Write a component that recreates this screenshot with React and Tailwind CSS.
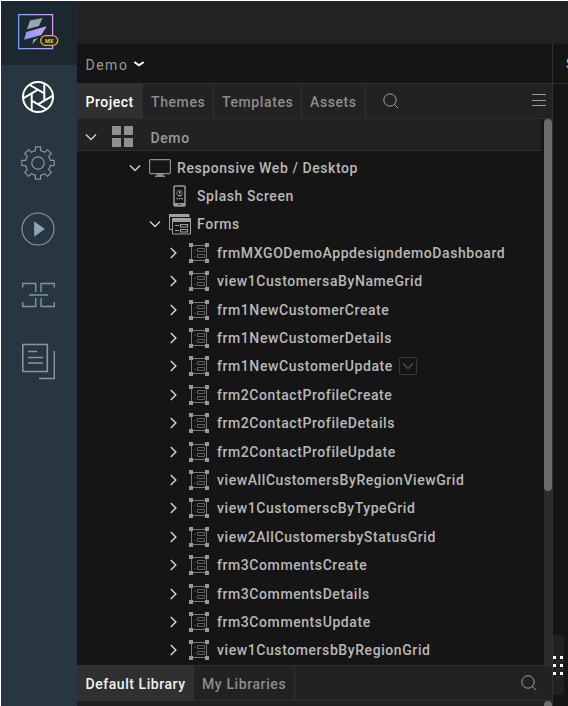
import React from "react";

const forms = [
  "frmMXGODemoAppdesigndemoDashboard",
  "view1CustomersaByNameGrid",
  "frm1NewCustomerCreate",
  "frm1NewCustomerDetails",
  "frm1NewCustomerUpdate",
  "frm2ContactProfileCreate",
  "frm2ContactProfileDetails",
  "frm2ContactProfileUpdate",
  "viewAllCustomersByRegionViewGrid",
  "view1CustomerscByTypeGrid",
  "view2AllCustomersbyStatusGrid",
  "frm3CommentsCreate",
  "frm3CommentsDetails",
  "frm3CommentsUpdate",
  "view1CustomersbByRegionGrid",
];

function Chevron({ right, className = "" }) {
  return (
    <svg className={`shrink-0 ${className}`} width="12" height="12" viewBox="0 0 12 12" fill="none" stroke="currentColor" strokeWidth="1.5">
      <path d={right ? "M3.8 1 L8.8 6 L3.8 11" : "M1 3.5 L6 8.5 L11 3.5"} />
    </svg>
  );
}

function SearchIcon() {
  return (
    <svg className="shrink-0" width="16" height="16" viewBox="0 0 16 16" fill="none" stroke="#a0a0a0" strokeWidth="1">
      <circle cx="7" cy="7" r="6.2" />
      <path d="M11.3 11.3 L15.3 15.3" />
    </svg>
  );
}

function FormIcon() {
  return (
    <svg className="shrink-0" width="20" height="20" viewBox="0 0 20 20" fill="none">
      <path d="M2 2.5H18M2 17.5H18M2.5 2V18M17.5 2V18" stroke="#777" />
      <path d="M8.5 5.5h7v3h-7zM8.5 11.5h7v3h-7z" stroke="#606060" />
      <path d="M5 7.5h2M5 13.5h2" stroke="#3a3a3a" />
      <path d="M0 0h4v4H0zM16 0h4v4h-4zM0 16h4v4H0zM16 16h4v4h-4z" fill="#999" />
    </svg>
  );
}

function FormsIcon() {
  return (
    <svg className="shrink-0" width="22" height="21" viewBox="0 0 22 21" fill="none">
      <path d="M.5 16V.5H20V3M.5 15.5H3" stroke="#a0a0a0" />
      <path d="M0 0h20v3H0z" fill="#a0a0a0" />
      <path d="M3.5 4.5h18v15.5h-18z" fill="#151515" stroke="#a0a0a0" />
      <path d="M3 4h19v4H3z" fill="#a0a0a0" />
      <path d="M11.5 10.5h7v2.5h-7zM11.5 15.5h7v2.5h-7zM6 11.5h4M6 16.5h4" stroke="#a0a0a0" strokeWidth="1.2" />
    </svg>
  );
}

function MonitorIcon() {
  return (
    <svg className="shrink-0" width="22" height="18" viewBox="0 0 22 18" fill="none">
      <rect x=".6" y=".6" width="20.8" height="14" rx="1" stroke="#909090" strokeWidth="1.2" />
      <path d="M8 15h6v1.5h2V18H6v-1.5h2z" fill="#8c8c8c" />
    </svg>
  );
}

function PhoneIcon() {
  return (
    <svg className="shrink-0" width="13" height="22" viewBox="0 0 13 22" fill="none">
      <rect x="1" y="1" width="11" height="20" rx="1" stroke="#999" strokeWidth="1.5" />
      <path d="M1 18h11v3H1z" fill="#999" />
      <circle cx="6.5" cy="8" r="2.8" stroke="#777" strokeWidth=".9" />
      <path d="M6 6h1.4v3H6zM3.5 13h1.5v1.2H3.5zM6 13h1.5v1.2H6zM8.4 13H10v1.2H8.4zM5 10h3.5v1.2H5z" fill="#a0a0a0" />
      <path d="M5.5 19h2v1h-2z" fill="#222" />
    </svg>
  );
}

function Logo() {
  return (
    <svg className="ml-[17px] mt-3 shrink-0" width="42" height="38" viewBox="0 0 42 38" fill="none">
      <defs>
        <linearGradient id="edge" x1="0" y1="0" x2="36" y2="0" gradientUnits="userSpaceOnUse">
          <stop stopColor="#7aa2f7" />
          <stop offset="1" stopColor="#d79af5" />
        </linearGradient>
        <linearGradient id="blade" x1="6" y1="24" x2="28" y2="16" gradientUnits="userSpaceOnUse">
          <stop stopColor="#7c9cf8" />
          <stop offset="1" stopColor="#d59af5" />
        </linearGradient>
      </defs>
      <rect x=".6" y="1.6" width="34" height="34" stroke="url(#edge)" strokeWidth="1.3" />
      <path d="M12 7.5 L24.5 5 L21 13 L9 16.3Z" fill="#96a5ae" />
      <path d="M8.3 18.9 L28.7 13.3 L23.3 22 L6 26.7Z" fill="url(#blade)" />
      <path d="M15.3 26.5 L20 24.8 L14.3 31.2Z" fill="#96a5ae" />
      <rect x="22.7" y="22.7" width="17" height="9.6" rx="4.8" fill="#1d272f" stroke="#e5b51c" strokeWidth="1.3" />
      <text x="31.2" y="29.5" textAnchor="middle" fill="#e5b51c" fontFamily="Roboto, sans-serif" fontWeight="900" fontSize="5.6">MX</text>
    </svg>
  );
}

function ApertureIcon() {
  return (
    <svg width="34" height="34" viewBox="0 0 34 34" fill="none" stroke="white" strokeWidth="2">
      <circle cx="17" cy="17" r="15" />
      <path d="M10.7 13.35V30.6M17 9.7L2.1 18.35M23.3 13.35L8.4 4.75M23.3 20.65V3.4M17 24.3L31.9 15.65M10.7 20.65L25.6 29.25" />
    </svg>
  );
}

function GearIcon() {
  return (
    <svg width="34" height="34" viewBox="0 0 34 34" fill="none" stroke="#8596aa" strokeWidth="1.2" strokeLinejoin="round">
      <circle cx="17" cy="17" r="6.2" />
      <path d="M14.4 .8h5.2v3.8l4.1 1.7 2.7-2.7 4 4-2.7 2.7 1.7 4.1h3.8v5.2h-3.8l-1.7 4.1 2.7 2.7-4 4-2.7-2.7-4.1 1.7v3.8h-5.2v-3.8l-4.1-1.7-2.7 2.7-4-4 2.7-2.7-1.7-4.1H.8v-5.2h3.8l1.7-4.1-2.7-2.7 4-4 2.7 2.7 4.1-1.7z" />
    </svg>
  );
}

function PlayIcon() {
  return (
    <svg width="34" height="34" viewBox="0 0 34 34" fill="none">
      <circle cx="17" cy="17" r="16" stroke="#8596aa" strokeWidth="1.2" />
      <path d="M13.2 9.3v15.4L23.8 17z" fill="#91a2b9" />
    </svg>
  );
}

function FlowIcon() {
  return (
    <svg width="34" height="26" viewBox="0 0 34 26" fill="none" stroke="#8094a3" strokeWidth="1.4">
      <path d="M1.7 5.5V1.5h13v8.5M33.3 5.5V1.5H20v8.5M1.7 20v4.5h13V16M33.3 20v4.5H20V16M8 13h19" />
    </svg>
  );
}

function DocsIcon() {
  return (
    <svg width="34" height="37" viewBox="0 0 34 37" fill="none" stroke="#8497a8">
      <path d="M1.8 1.5h24.5v27H1.8z" strokeWidth="1.6" />
      <path d="M7 8.5h9M7 14.5h15M7 20h15" strokeWidth="1.6" />
      <path d="M33.3 8v27.5H18" strokeWidth="1.4" />
    </svg>
  );
}

export default function App() {
  return (
    <div className="flex h-[706px] w-[568px] overflow-hidden border-l border-t border-white bg-[#151515] font-['Roboto',sans-serif] text-[14px] font-medium leading-none text-[#b8b8b8]">
      <aside className="flex w-[76px] shrink-0 flex-col bg-[#283640]">
        <div className="flex h-16 bg-[#1d272f]"><Logo /></div>
        <nav className="flex flex-col items-start pl-5">
          <div className="mt-[15px]"><ApertureIcon /></div>
          <div className="mt-8"><GearIcon /></div>
          <div className="mt-8"><PlayIcon /></div>
          <div className="mt-[36px]"><FlowIcon /></div>
          <div className="mt-[35px]"><DocsIcon /></div>
        </nav>
      </aside>

      <div className="flex min-w-0 flex-1 flex-col">
        <div className="h-[43px] shrink-0 border-b border-[#1d1d1d] bg-[#232323]" />
        <div className="flex min-h-0 flex-1">
          <section className="flex w-[476px] shrink-0 flex-col border-r border-[#303030]">
            <header className="flex h-10 shrink-0 items-center border-b border-[#303030] pl-[8.5px] pt-[3px] text-[#999]">
              <span className="font-normal tracking-[1.5px]">Demo</span>
              <svg className="mb-[2px] ml-[5px]" width="12" height="8" viewBox="0 0 12 8" fill="none" stroke="white" strokeWidth="2.1" strokeLinecap="round"><path d="M2 2.5 L6 5.3 L10 2.5" /></svg>
            </header>

            <div className="flex h-[35px] shrink-0 border-b border-[#2e2e2e] bg-[#222] tracking-[0.6px] text-[#8c8c8c]">
              <div className="flex w-[66px] items-center bg-[#303030] pl-[8.5px] pt-px tracking-[0.5px] text-white">Project</div>
              <div className="flex w-[71px] items-center border-r border-[#333] pl-2 pt-px">Themes</div>
              <div className="flex w-[88px] items-center border-r border-[#333] pl-2 pt-px">Templates</div>
              <div className="flex w-[64px] items-center border-r border-[#333] pl-2 pt-px">Assets</div>
              <div className="flex flex-1 items-center justify-between pl-[17px] pr-[6px]">
                <SearchIcon />
                <svg className="mb-[2px]" width="14" height="14" viewBox="0 0 14 14" stroke="#9a9a9a" strokeWidth="1"><path d="M0 1.5h14M0 7.5h14M0 12.5h14" /></svg>
              </div>
            </div>

            <div className="flex h-[546px] shrink-0">
              <div className="min-w-0 flex-1">
                <div className="mr-[3px] flex h-8 items-center border-b border-[#303030] bg-[#222] pl-2 pt-[4px] text-[#999]">
                  <Chevron className="text-[#ccc]" />
                  <div className="ml-[15px] grid grid-cols-2 gap-[3px]">
                    <i className="h-[9px] w-[9px] bg-[#909090]" /><i className="h-[9px] w-[9px] bg-[#909090]" />
                    <i className="h-[9px] w-[9px] bg-[#909090]" /><i className="h-[9px] w-[9px] bg-[#909090]" />
                  </div>
                  <span className="ml-[17.5px] mt-[2px] tracking-[0.6px]">Demo</span>
                </div>
                <div className="pt-[2.5px] tracking-[0.58px]">
                  <div className="flex h-[28.4px] items-center pl-[52px]">
                    <Chevron className="text-[#ccc]" />
                    <span className="ml-2"><MonitorIcon /></span>
                    <span className="ml-[6px]">Responsive Web / Desktop</span>
                  </div>
                  <div className="flex h-[28.4px] items-center pl-[96px]">
                    <PhoneIcon />
                    <span className="ml-[11px]">Splash Screen</span>
                  </div>
                  <div className="flex h-[28.4px] items-center pl-[72px]">
                    <Chevron className="text-[#ccc]" />
                    <span className="ml-2"><FormsIcon /></span>
                    <span className="ml-[6px]">Forms</span>
                  </div>
                  {forms.map((name) => (
                    <div key={name} className="flex h-[28.4px] items-center whitespace-nowrap pl-[90px]">
                      <Chevron right className="text-[#d0d0d0]" />
                      <span className="ml-[10px]"><FormIcon /></span>
                      <span className="ml-2">{name}</span>
                      {name === "frm1NewCustomerUpdate" && (
                        <span className="ml-[6px] flex h-[18px] w-[18px] items-center justify-center rounded-[2px] border border-[#383838] text-[#505050]">
                          <Chevron />
                        </span>
                      )}
                    </div>
                  ))}
                </div>
              </div>
              <div className="w-2 bg-[#2b2b2b]"><div className="h-[372px] rounded-full bg-[#6b6b6b]" /></div>
            </div>

            <div className="flex h-9 shrink-0 border-b border-t border-[#303030] bg-[#222]">
              <div className="flex w-[117px] items-center bg-[#303030] pl-[8.5px] pt-px tracking-[0.55px] text-[#f2f2f2]">Default Library</div>
              <div className="flex w-[101px] items-center border-r border-[#333] pl-2 pt-px tracking-[0.6px] text-[#8c8c8c]">My Libraries</div>
              <div className="flex flex-1 items-center justify-end pr-[15px]"><SearchIcon /></div>
            </div>
            <div className="flex flex-1 justify-end bg-[#1f1f1f]">
              <div className="w-2 rounded-t-full bg-[#6b6b6b]" />
            </div>
          </section>

          <section className="flex min-w-0 flex-1 flex-col overflow-hidden">
            <div className="flex h-10 shrink-0 items-center border-b border-[#303030] pl-[13px] pt-px">S</div>
            <div className="mt-[551px] grid h-[60px] w-[11px] shrink-0 grid-cols-2 content-center justify-center gap-x-[2px] gap-y-[5px] rounded-r-[4px] bg-[#222]">
              {[0, 1, 2, 3, 4, 5].map((n) => <i key={n} className="h-[3px] w-[3px] bg-white" />)}
            </div>
          </section>
        </div>
      </div>
    </div>
  );
}
